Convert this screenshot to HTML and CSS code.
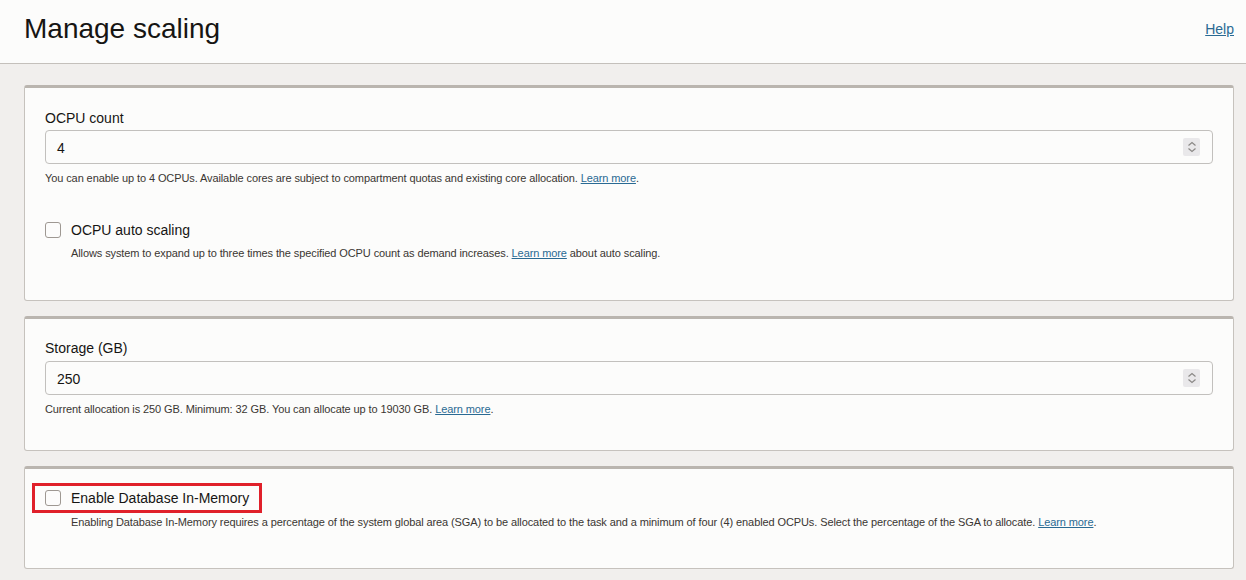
FILE: index.html
```html
<!DOCTYPE html>
<html>
<head>
<meta charset="utf-8">
<link rel="stylesheet" href="styles.css">
</head>
<body>
<header class="page-header">
  <h1 class="title">Manage scaling</h1>
  <a class="link help" href="#">Help</a>
</header>
<main class="content">
  <section class="card card-ocpu">
    <label class="field-label">OCPU count</label>
    <div class="input">
      <span class="input-value">4</span>
      <span class="spinner">
        <svg width="16" height="18" viewBox="0 0 16 18"><path d="M4.5 7.5 L8 4.5 L11.5 7.5" fill="none" stroke="#8a8886" stroke-width="1.2"/><path d="M4.5 10.5 L8 13.5 L11.5 10.5" fill="none" stroke="#8a8886" stroke-width="1.2"/></svg>
      </span>
    </div>
    <p class="help-text">You can enable up to 4 OCPUs. Available cores are subject to compartment quotas and existing core allocation. <a class="link" href="#">Learn more</a>.</p>
    <div class="check-row gap-top">
      <span class="checkbox"></span>
      <span class="check-label">OCPU auto scaling</span>
    </div>
    <p class="help-text sub">Allows system to expand up to three times the specified OCPU count as demand increases. <a class="link" href="#">Learn more</a> about auto scaling.</p>
  </section>

  <section class="card card-storage">
    <label class="field-label">Storage (GB)</label>
    <div class="input">
      <span class="input-value">250</span>
      <span class="spinner">
        <svg width="16" height="18" viewBox="0 0 16 18"><path d="M4.5 7.5 L8 4.5 L11.5 7.5" fill="none" stroke="#8a8886" stroke-width="1.2"/><path d="M4.5 10.5 L8 13.5 L11.5 10.5" fill="none" stroke="#8a8886" stroke-width="1.2"/></svg>
      </span>
    </div>
    <p class="help-text">Current allocation is 250 GB. Minimum: 32 GB. You can allocate up to 19030 GB. <a class="link" href="#">Learn more</a>.</p>
  </section>

  <section class="card card-memory">
    <div class="check-row highlighted">
      <span class="checkbox"></span>
      <span class="check-label">Enable Database In-Memory</span>
    </div>
    <p class="help-text sub mem">Enabling Database In-Memory requires a percentage of the system global area (SGA) to be allocated to the task and a minimum of four (4) enabled OCPUs. Select the percentage of the SGA to allocate. <a class="link" href="#">Learn more</a>.</p>
  </section>
</main>
</body>
</html>
```

FILE: styles.css
```css
* { box-sizing: border-box; }
html, body {
  margin: 0;
  padding: 0;
  background: #f1efed;
  font-family: "Liberation Sans", Arial, sans-serif;
  color: #161513;
}
.page-header {
  height: 64px;
  background: #fcfcfb;
  border-bottom: 1px solid #c4c0bb;
  display: flex;
  justify-content: space-between;
  align-items: flex-start;
  padding: 0 12px 0 24px;
}
.title {
  margin: 0;
  font-size: 28px;
  font-weight: normal;
  line-height: 32px;
  padding-top: 13px;
}
.link {
  color: #2a6a93;
  text-decoration: underline;
}
.help {
  font-size: 14px;
  line-height: 16px;
  padding-top: 21px;
}
.content {
  padding: 21px 12px 0 24px;
  display: flex;
  flex-direction: column;
  gap: 15px;
}
.card {
  background: #fcfcfb;
  border: 1px solid #c6c2bd;
  border-top: 3px solid #bab5af;
  border-radius: 3px;
  padding: 21px 20px 0 20px;
}
.card-ocpu { height: 216px; }
.card-storage { height: 135px; padding-top: 20px; }
.card-memory { height: 103px; padding-top: 20px; }
.field-label {
  display: block;
  font-size: 14px;
  line-height: 18px;
}
.input {
  margin-top: 3px;
  height: 34px;
  border: 1px solid #c2c0bd;
  border-radius: 4px;
  background: #fcfcfb;
  display: flex;
  align-items: center;
  justify-content: space-between;
  padding: 0 12px 0 11px;
}
.card-storage .input { margin-top: 4px; }
.input-value {
  font-size: 14px;
  padding-top: 1px;
}
.spinner {
  width: 17px;
  height: 18px;
  background: #e9e8ea;
  border-radius: 2px;
  display: flex;
  align-items: center;
  justify-content: center;
}
.spinner svg { display: block; }
.help-text {
  margin: 7px 0 0 0;
  font-size: 11px;
  line-height: 14px;
  letter-spacing: -0.1px;
  color: #3a3632;
}
.help-text.sub {
  padding-left: 26px;
}
.help-text.mem { margin-top: 8px; }
.check-row {
  display: flex;
  width: fit-content;
  align-items: center;
  height: 18px;
  position: relative;
}
.gap-top { margin-top: 36px; }
.checkbox {
  width: 16px;
  height: 16px;
  border: 1px solid #9e9892;
  border-radius: 3px;
  background: #fcfcfb;
  margin-right: 10px;
}
.check-label {
  font-size: 14px;
  line-height: 18px;
}
.highlighted::after {
  content: "";
  position: absolute;
  left: -13px;
  top: -6px;
  right: -13px;
  bottom: -6px;
  border: 3px solid #e0202a;
  pointer-events: none;
}
```
